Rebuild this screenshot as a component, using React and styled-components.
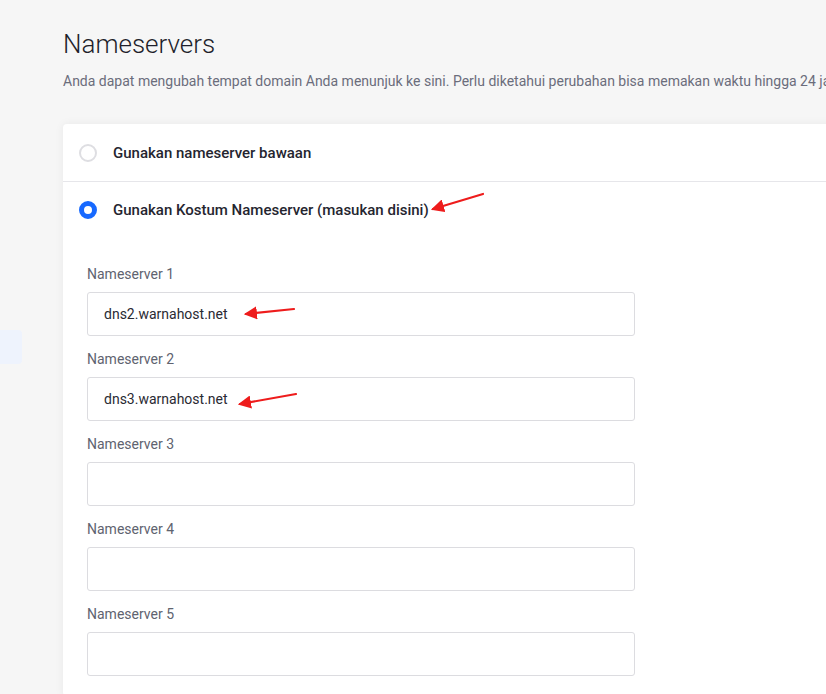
import styled, { createGlobalStyle } from "styled-components";

const GlobalStyle = createGlobalStyle`
  * { box-sizing: border-box; }
  html, body { margin: 0; padding: 0; background: #f6f6f6; }
  body { font-family: Roboto, "Noto Sans", Arial, sans-serif; overflow: hidden; }
`;

const fields = [
  { label: "Nameserver 1", value: "dns2.warnahost.net", arrow: "a" },
  { label: "Nameserver 2", value: "dns3.warnahost.net", arrow: "b" },
  { label: "Nameserver 3", value: "" },
  { label: "Nameserver 4", value: "" },
  { label: "Nameserver 5", value: "" },
];

const Arrow = ({ id, w, h, x1, y1, x2, y2, top, left }) => (
  <ArrowSvg width={w} height={h} viewBox={`0 0 ${w} ${h}`} $top={top} $left={left}>
    <defs>
      <marker id={id} markerWidth="6" markerHeight="6" refX="5" refY="3" orient="auto" markerUnits="strokeWidth">
        <path d="M0,0 L6,3 L0,6 Z" fill="#ee1c1c" />
      </marker>
    </defs>
    <line x1={x1} y1={y1} x2={x2} y2={y2} stroke="#ee1c1c" strokeWidth="2.2" strokeLinecap="round" markerEnd={`url(#${id})`} />
  </ArrowSvg>
);

const App = () => {
  return (
    <Page>
      <GlobalStyle />
      <Sidebar>
        <SideItem />
      </Sidebar>
      <Main>
        <Title>Nameservers</Title>
        <Lead>
          Anda dapat mengubah tempat domain Anda menunjuk ke sini. Perlu diketahui perubahan bisa memakan waktu hingga 24 jam
        </Lead>
        <Card>
          <OptionRow>
            <Radio />
            <OptionText>Gunakan nameserver bawaan</OptionText>
          </OptionRow>
          <CustomBlock>
            <OptionRow $plain>
              <Radio $checked />
              <OptionText>Gunakan Kostum Nameserver (masukan disini)</OptionText>
              <Arrow id="arr-opt" w={60} h={24} x1={56} y1={3} x2={6} y2={18} top={9} left={364} />
            </OptionRow>
            <Fields>
              {fields.map((f) => (
                <Field key={f.label}>
                  <Label>{f.label}</Label>
                  <InputBox>
                    <Value>{f.value}</Value>
                    {f.arrow === "a" && (
                      <Arrow id="arr-a" w={60} h={14} x1={54} y1={3} x2={6} y2={8} top={13} left={152} />
                    )}
                    {f.arrow === "b" && (
                      <Arrow id="arr-b" w={66} h={20} x1={62} y1={4} x2={6} y2={14} top={12} left={146} />
                    )}
                  </InputBox>
                </Field>
              ))}
            </Fields>
          </CustomBlock>
        </Card>
      </Main>
    </Page>
  );
};

const Page = styled.div`
  display: flex;
  min-height: 694px;
  width: 826px;
  overflow: hidden;
`;

const Sidebar = styled.aside`
  width: 22px;
  flex-shrink: 0;
  padding-top: 330px;
  overflow: hidden;
`;

const SideItem = styled.div`
  width: 40px;
  height: 34px;
  margin-left: -18px;
  background: #eef3fd;
  border-radius: 4px;
`;

const Main = styled.main`
  flex: 1;
  padding: 29px 0 0 41px;
  min-width: 0;
`;

const Title = styled.h1`
  margin: 0;
  font-size: 26px;
  line-height: 30px;
  font-weight: 300;
  color: #1f1f2b;
`;

const Lead = styled.p`
  margin: 12px 0 0;
  font-size: 14px;
  line-height: 20px;
  color: #6b6d7c;
  white-space: nowrap;
`;

const Card = styled.section`
  margin-top: 33px;
  width: 820px;
  background: #fff;
  border-radius: 4px;
  box-shadow: 0 0 10px rgba(0, 0, 0, 0.06);
`;

const OptionRow = styled.div`
  position: relative;
  display: flex;
  align-items: center;
  gap: 16px;
  height: ${(p) => (p.$plain ? "56px" : "58px")};
  padding-left: 16px;
  border-bottom: ${(p) => (p.$plain ? "none" : "1px solid #e6e6ea")};
`;

const Radio = styled.span`
  width: 18px;
  height: 18px;
  border-radius: 50%;
  flex-shrink: 0;
  background: #fff;
  border: ${(p) => (p.$checked ? "5px solid #1769ff" : "2px solid #dedee2")};
`;

const OptionText = styled.span`
  font-size: 15px;
  font-weight: 500;
  color: #25252f;
`;

const CustomBlock = styled.div`
  padding-bottom: 20px;
`;

const Fields = styled.div`
  display: flex;
  flex-direction: column;
  gap: 15px;
  padding: 28px 0 0 24px;
`;

const Field = styled.div`
  display: flex;
  flex-direction: column;
  gap: 10px;
`;

const Label = styled.label`
  font-size: 14px;
  line-height: 16px;
  color: #60636f;
`;

const InputBox = styled.div`
  position: relative;
  width: 548px;
  height: 44px;
  border: 1px solid #dcdce0;
  border-radius: 3px;
  display: flex;
  align-items: center;
  padding-left: 16px;
`;

const Value = styled.span`
  font-size: 14px;
  color: #2a2a33;
`;

const ArrowSvg = styled.svg`
  position: absolute;
  top: ${(p) => p.$top}px;
  left: ${(p) => p.$left}px;
  overflow: visible;
`;

export default App;
